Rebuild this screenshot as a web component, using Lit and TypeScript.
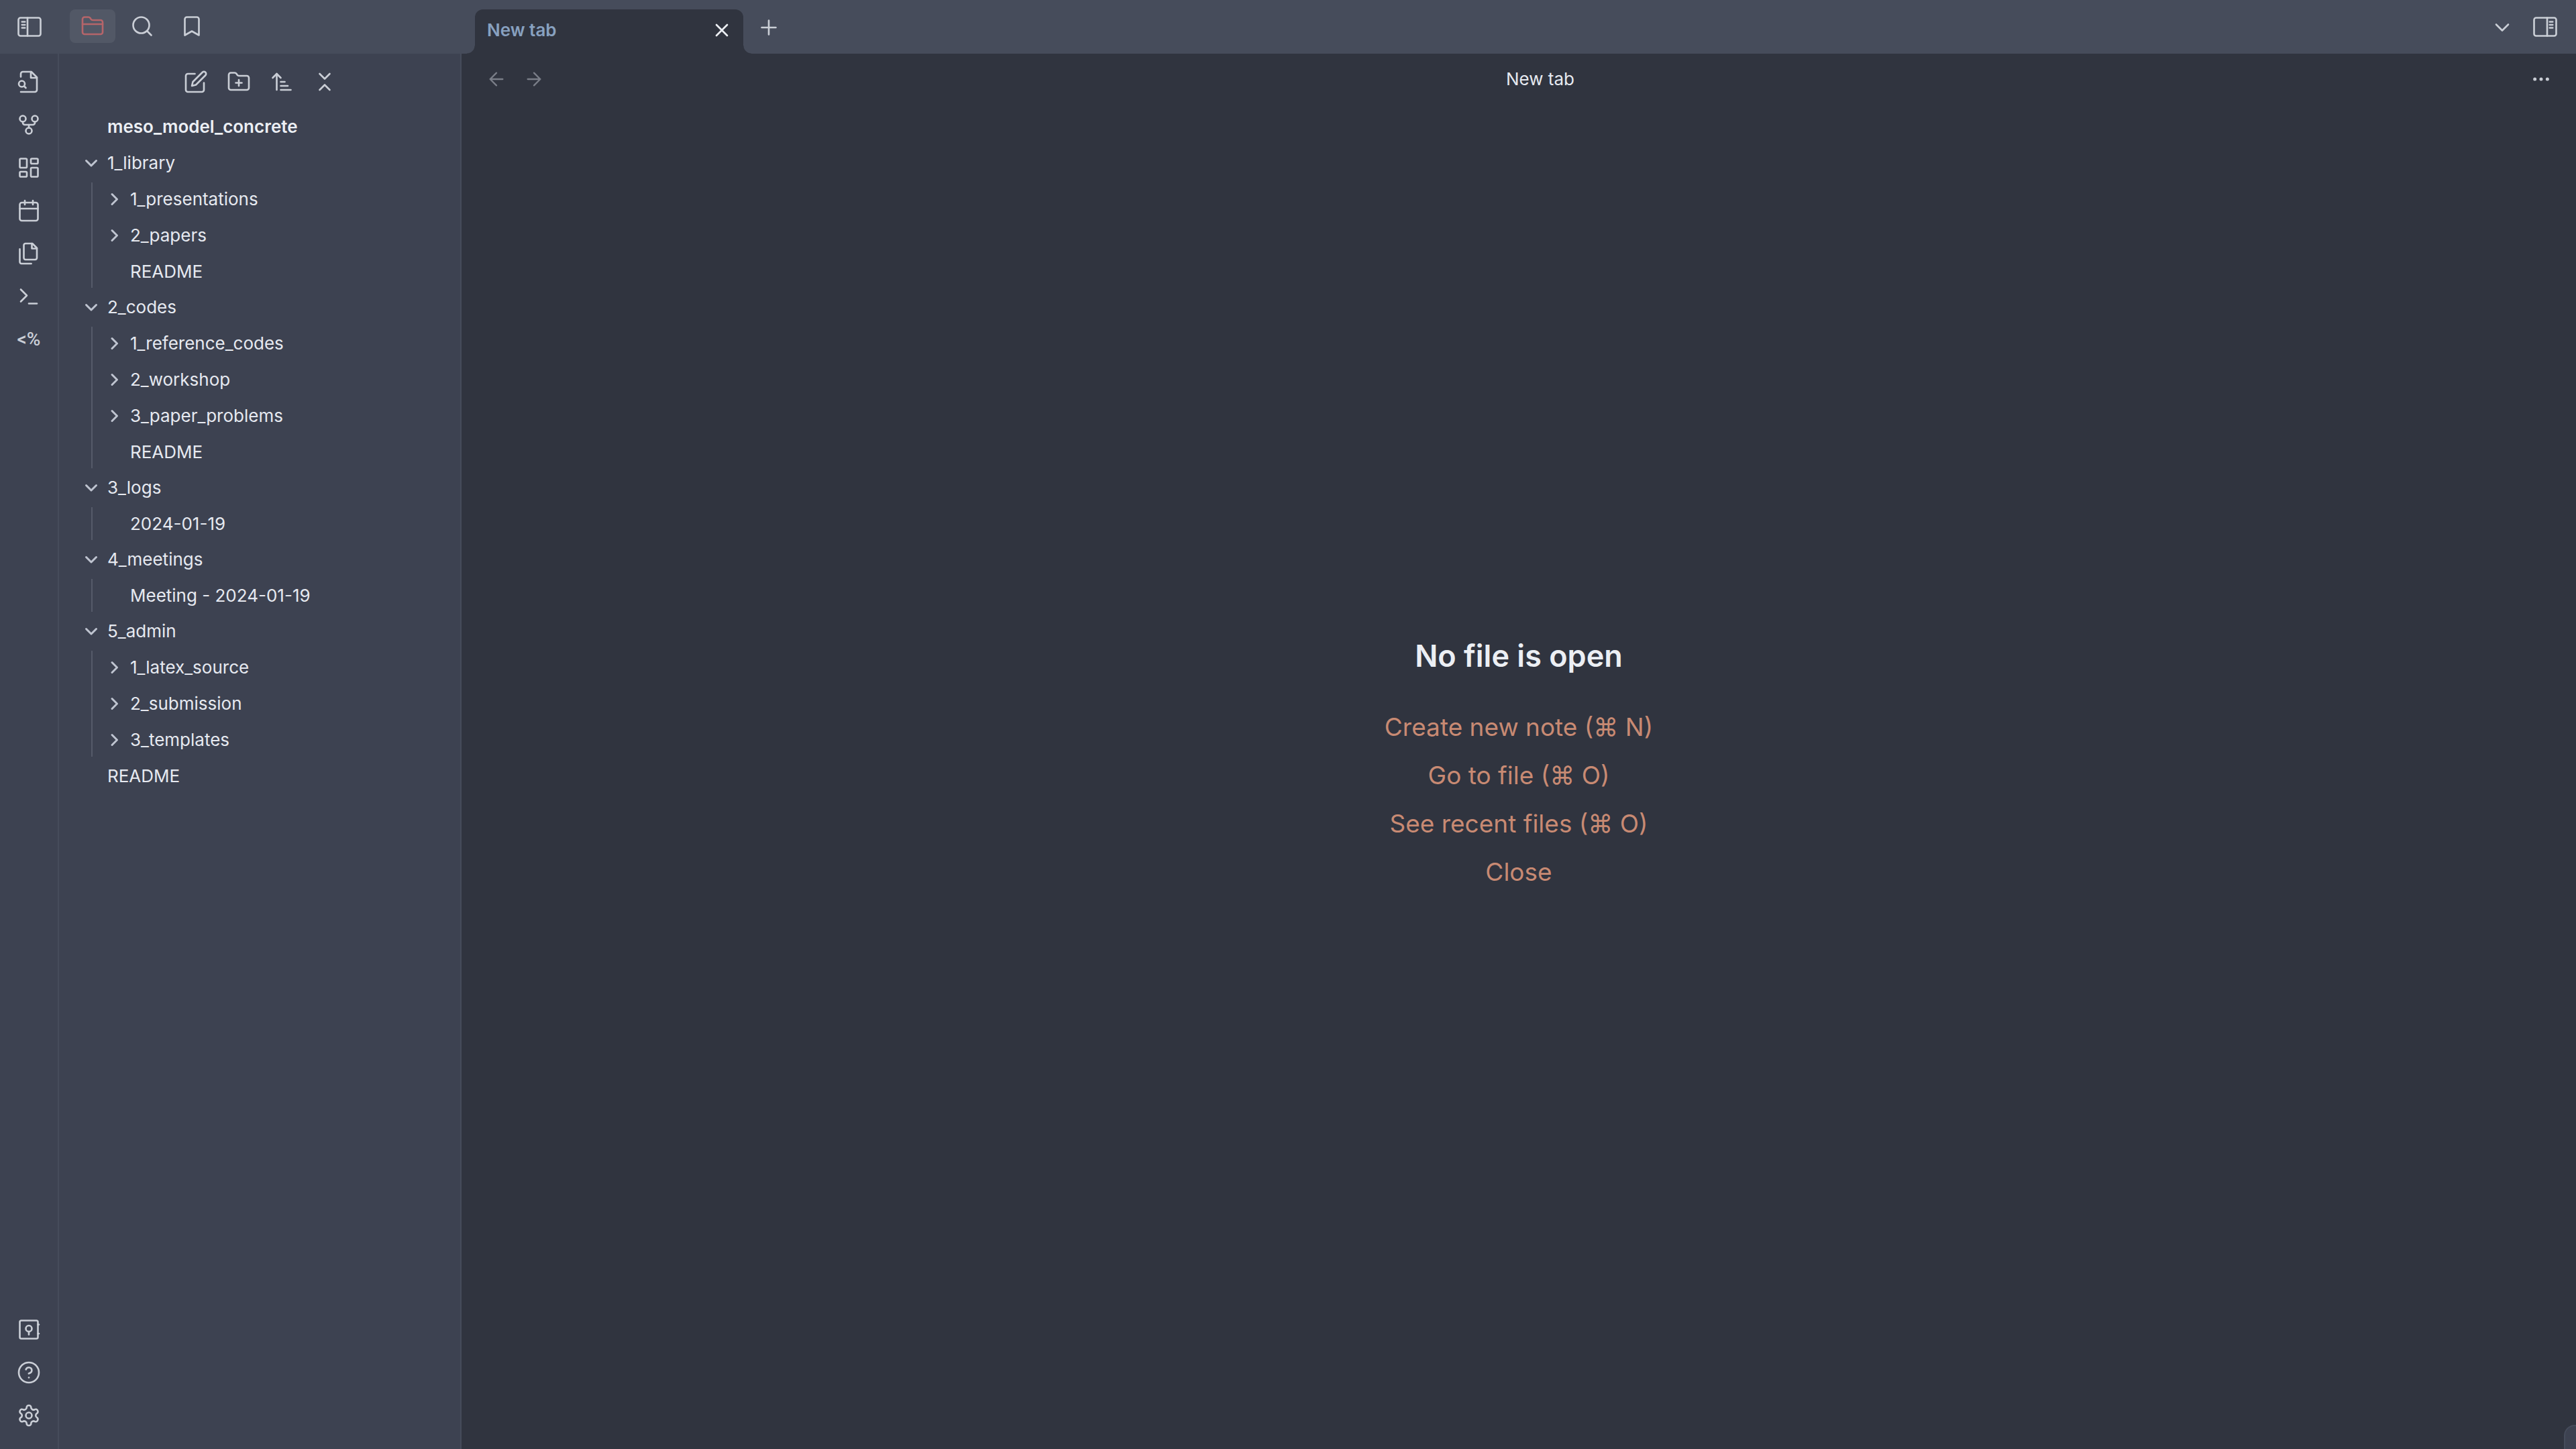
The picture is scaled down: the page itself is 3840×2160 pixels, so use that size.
import { LitElement, html, svg, css, nothing, type TemplateResult } from "lit";
import { customElement, property, state } from "lit/decorators.js";

const paths: Record<string, TemplateResult> = {
  folder: svg`<path d="M20 20a2 2 0 0 0 2-2V8a2 2 0 0 0-2-2h-7.9a2 2 0 0 1-1.69-.9L9.6 3.9A2 2 0 0 0 7.93 3H4a2 2 0 0 0-2 2v13a2 2 0 0 0 2 2Z"/><path d="M2 10h20"/>`,
  search: svg`<circle cx="11" cy="11" r="8"/><path d="m21 21-4.3-4.3"/>`,
  bookmark: svg`<path d="m19 21-7-4-7 4V5a2 2 0 0 1 2-2h10a2 2 0 0 1 2 2z"/>`,
  fileSearch: svg`<path d="M4 22h14a2 2 0 0 0 2-2V7.5L14.500 2H6a2 2 0 0 0-2 2v3"/><path d="M14 2v6h6"/><circle cx="5" cy="14" r="3"/><path d="m9 18-1.500-1.500"/>`,
  graph: svg`<circle cx="12" cy="18" r="3"/><circle cx="6" cy="6" r="3"/><circle cx="18" cy="6" r="3"/><path d="M18 9v1a2 2 0 0 1-2 2H8a2 2 0 0 1-2-2V9"/><path d="M12 12v3"/>`,
  dashboard: svg`<rect x="3" y="3" width="7" height="9" rx="1"/><rect x="14" y="3" width="7" height="5" rx="1"/><rect x="14" y="12" width="7" height="9" rx="1"/><rect x="3" y="16" width="7" height="5" rx="1"/>`,
  calendar: svg`<rect x="3" y="4" width="18" height="18" rx="2"/><path d="M16 2v4M8 2v4M3 10h18"/>`,
  files: svg`<path d="M15.5 2H8.6c-.4 0-.8.2-1.1.5-.3.3-.5.7-.5 1.1v12.8c0 .4.2.8.5 1.1.3.3.7.5 1.1.5h9.8c.4 0 .8-.2 1.1-.5.3-.3.5-.7.5-1.1V6.500L15.500 2z"/><path d="M3 7.6v12.8c0 .4.2.8.5 1.1.3.3.7.5 1.1.5h9.8"/><path d="M15 2v5h5"/>`,
  terminal: svg`<path d="m4 17 6-6-6-6"/><path d="M12 19h8"/>`,
  vault: svg`<rect x="3" y="3" width="18" height="18" rx="1.500"/><circle cx="12" cy="11" r="3"/><path d="M12 14v3M21 7h1M21 16h1"/>`,
  help: svg`<circle cx="12" cy="12" r="10"/><path d="M9.090 9a3 3 0 0 1 5.830 1c0 2-3 3-3 3"/><path d="M12 17h.01"/>`,
  settings: svg`<path d="M12.220 2h-.440a2 2 0 0 0-2 2v.180a2 2 0 0 1-1 1.730l-.430.250a2 2 0 0 1-2 0l-.150-.080a2 2 0 0 0-2.730.730l-.220.380a2 2 0 0 0 .730 2.730l.150.100a2 2 0 0 1 1 1.720v.510a2 2 0 0 1-1 1.740l-.150.090a2 2 0 0 0-.730 2.730l.220.380a2 2 0 0 0 2.730.730l.150-.080a2 2 0 0 1 2 0l.430.250a2 2 0 0 1 1 1.730V20a2 2 0 0 0 2 2h.440a2 2 0 0 0 2-2v-.180a2 2 0 0 1 1-1.730l.430-.250a2 2 0 0 1 2 0l.150.080a2 2 0 0 0 2.730-.730l.220-.390a2 2 0 0 0-.730-2.730l-.150-.080a2 2 0 0 1-1-1.740v-.500a2 2 0 0 1 1-1.740l.150-.090a2 2 0 0 0 .730-2.730l-.220-.380a2 2 0 0 0-2.730-.730l-.150.080a2 2 0 0 1-2 0l-.430-.250a2 2 0 0 1-1-1.730V4a2 2 0 0 0-2-2z"/><circle cx="12" cy="12" r="3"/>`,
  edit: svg`<path d="M11 4H4a2 2 0 0 0-2 2v14a2 2 0 0 0 2 2h14a2 2 0 0 0 2-2v-7"/><path d="M18.500 2.500a2.121 2.121 0 0 1 3 3L12 15l-4 1 1-4 9.500-9.500z"/>`,
  folderPlus: svg`<path d="M4 20h16a2 2 0 0 0 2-2V8a2 2 0 0 0-2-2h-7.930a2 2 0 0 1-1.660-.9l-.820-1.200A2 2 0 0 0 7.930 3H4a2 2 0 0 0-2 2v13c0 1.100.9 2 2 2Z"/><path d="M12 10v6M9 13h6"/>`,
  sort: svg`<path d="m3 8 4-4 4 4"/><path d="M7 4v16M11 12h4M11 16h7M11 20h10"/>`,
  collapse: svg`<path d="m7 20 5-5 5 5M7 4l5 5 5-5"/>`,
  close: svg`<path d="M18 6 6 18M6 6l12 12"/>`,
  plus: svg`<path d="M12 5v14M5 12h14"/>`,
  back: svg`<path d="m12 19-7-7 7-7M19 12H5"/>`,
  forward: svg`<path d="M5 12h14M12 5l7 7-7 7"/>`,
  chevronDown: svg`<path d="m6 9 6 6 6-6"/>`,
  more: svg`<circle cx="12" cy="12" r="1"/><circle cx="19" cy="12" r="1"/><circle cx="5" cy="12" r="1"/>`,
  panelLeft: svg`<rect x="1" y="3" width="22" height="18" rx="2"/><path d="M10 3v18M4.500 7h3M4.500 10h3M4.500 13h3"/>`,
  panelRight: svg`<rect x="1" y="3" width="22" height="18" rx="2"/><path d="M14 3v18M16.500 7h3M16.500 10h3M16.500 13h3"/>`,
};

const icon = (name: string, size = "") => html`
  <svg class="icon ${size}" viewBox="0 0 24 24" aria-hidden="true">${paths[name]}</svg>`;

const base = css`
  * { box-sizing: border-box; }
  button {
    margin: 0;
    padding: 0;
    border: 0;
    background: none;
    color: inherit;
    font: inherit;
    cursor: pointer;
  }
  .icon {
    display: block;
    width: 36px;
    height: 36px;
    fill: none;
    stroke: currentColor;
    stroke-width: 1.75;
    stroke-linecap: round;
    stroke-linejoin: round;
  }
  .icon.small { width: 32px; height: 32px; }
  .icon-button {
    display: flex;
    align-items: center;
    justify-content: center;
    width: 64px;
    height: 64px;
    color: var(--icon);
  }
`;

interface TreeNode {
  name: string;
  open?: boolean;
  children?: TreeNode[];
}

const folder = (name: string, children: TreeNode[] = [], open = false): TreeNode => ({ name, children, open });
const file = (name: string): TreeNode => ({ name });

const vault: TreeNode[] = [
  folder("1_library", [folder("1_presentations"), folder("2_papers"), file("README")], true),
  folder("2_codes", [folder("1_reference_codes"), folder("2_workshop"), folder("3_paper_problems"), file("README")], true),
  folder("3_logs", [file("2024-01-19")], true),
  folder("4_meetings", [file("Meeting - 2024-01-19")], true),
  folder("5_admin", [folder("1_latex_source"), folder("2_submission"), folder("3_templates")], true),
  file("README"),
];

@customElement("file-tree")
class FileTree extends LitElement {
  static styles = [base, css`
    :host { display: block; }
    .title, .row {
      display: flex;
      align-items: center;
      width: 100%;
      text-align: left;
      white-space: nowrap;
    }
    .title {
      margin: 0 0 4px;
      padding: 8px 0 8px 72px;
      font-size: 26px;
      line-height: 34px;
      font-weight: 600;
      color: var(--text-strong);
    }
    .list {
      display: flex;
      flex-direction: column;
      gap: 4px;
      margin: 0;
      padding: 0;
      list-style: none;
    }
    .list .list {
      margin: 4px 0 0 48px;
      border-left: 2px solid var(--guide);
    }
    .row { padding: 8px 0 8px 36px; line-height: 34px; }
    .list .list .row { padding-left: 20px; }
    .row.file { line-height: 33px; }
    .caret {
      flex: none;
      width: 24px;
      height: 24px;
      margin-right: 12px;
      fill: none;
      stroke: var(--caret);
      stroke-width: 3;
      stroke-linecap: round;
      stroke-linejoin: round;
    }
    .file::before {
      content: "";
      flex: none;
      width: 36px;
    }
  `];

  @property({ attribute: false }) nodes: TreeNode[] = [];
  @property() heading = "";

  private toggle(node: TreeNode) {
    node.open = !node.open;
    this.requestUpdate();
  }

  private renderNode(node: TreeNode): TemplateResult {
    if (!node.children) {
      return html`<li><button class="row file">${node.name}</button></li>`;
    }
    return html`
      <li>
        <button class="row" aria-expanded=${node.open ? "true" : "false"} @click=${() => this.toggle(node)}>
          <svg class="caret" viewBox="0 0 24 24" aria-hidden="true">
            <path d=${node.open ? "M4.500 8.500l7.500 7.500 7.500-7.500" : "M9 4.500l7.500 7.500-7.500 7.500"}></path>
          </svg>
          ${node.name}
        </button>
        ${node.open && node.children.length ? this.renderList(node.children) : nothing}
      </li>`;
  }

  private renderList(nodes: TreeNode[]): TemplateResult {
    return html`<ul class="list">${nodes.map((n) => this.renderNode(n))}</ul>`;
  }

  render() {
    return html`<h2 class="title">${this.heading}</h2>${this.renderList(this.nodes)}`;
  }
}

@customElement("app-root")
class AppRoot extends LitElement {
  static styles = [base, css`
    :host {
      --bar: #464c5b;
      --side: #3d4251;
      --main: #30343f;
      --line: #464c5b;
      --guide: #555a69;
      --icon: #caced6;
      --caret: #bfc4d0;
      --text: #e6e9f0;
      --text-strong: #eceff4;
      --accent: #c88a73;
      --tab: #88a1c0;
      --folder: #b5656a;
      display: grid;
      grid-template-columns: 88px 600px minmax(0, 1fr);
      grid-template-rows: 80px minmax(0, 1fr);
      position: relative;
      height: 100vh;
      overflow: hidden;
      background: var(--main);
      color: var(--text);
      font-family: Inter, "Liberation Sans", sans-serif;
      font-size: 26px;
      line-height: 34px;
    }
    .corner, .side-tabs, .tab-bar { background: var(--bar); }
    .corner {
      display: flex;
      align-items: center;
      justify-content: center;
    }
    .side-tabs {
      display: flex;
      align-items: flex-start;
      gap: 6px;
      padding: 14px 16px;
    }
    .side-tabs .icon-button {
      width: 68px;
      height: 50px;
      border-radius: 8px;
    }
    .side-tabs .active {
      background: #525866;
      color: var(--folder);
    }
    .tab-bar {
      display: flex;
      align-items: flex-end;
      padding: 0 14px 0 20px;
    }
    .tab {
      position: relative;
      display: flex;
      align-items: center;
      justify-content: space-between;
      width: 400px;
      height: 66px;
      padding: 0 16px 4px 18px;
      border-radius: 12px 12px 0 0;
      background: var(--main);
      color: var(--tab);
      font-weight: 600;
    }
    .tab::before, .tab::after {
      content: "";
      position: absolute;
      bottom: 0;
      width: 12px;
      height: 12px;
    }
    .tab::before {
      right: 100%;
      background: radial-gradient(circle at 0 0, transparent 11px, var(--main) 12px);
    }
    .tab::after {
      left: 100%;
      background: radial-gradient(circle at 100% 0, transparent 11px, var(--main) 12px);
    }
    .tab-close { color: var(--text-strong); }
    .tab-close .icon { stroke-width: 2; }
    .tab-bar .icon-button { height: 78px; }
    .tab-bar .add { margin: 0 auto 0 6px; }
    .tab-bar .panel { height: 80px; }
    .ribbon {
      display: flex;
      flex-direction: column;
      justify-content: space-between;
      align-items: center;
      padding: 10px 0 18px;
      background: var(--side);
      border-right: 2px solid var(--line);
    }
    .glyph {
      font-family: Roboto, "Liberation Sans", sans-serif;
      font-size: 28px;
      font-weight: 500;
    }
    .side {
      background: var(--side);
      border-right: 2px solid var(--line);
      overflow: hidden;
    }
    .side-tools {
      display: flex;
      justify-content: center;
      padding: 10px 0 10px 2px;
    }
    .main {
      display: flex;
      flex-direction: column;
    }
    .view-header {
      display: flex;
      align-items: center;
      height: 76px;
      padding: 0 30px 0 24px;
    }
    .nav { display: flex; }
    .nav .icon-button {
      width: 56px;
      color: #7a7e88;
    }
    .view-header .more { width: 44px; }
    .view-title {
      flex: 1;
      padding-left: 2px;
      text-align: center;
    }
    .empty {
      flex: 1;
      display: flex;
      flex-direction: column;
      align-items: center;
      justify-content: center;
      padding-bottom: 32px;
    }
    .empty-title {
      margin: 0 0 40px;
      font-size: 45px;
      line-height: 60px;
      font-weight: 600;
      color: var(--text-strong);
    }
    .action {
      padding: 10px 0;
      font-size: 37px;
      line-height: 52px;
      color: var(--accent);
    }
    .status {
      position: absolute;
      right: 0;
      bottom: 0;
      width: 18px;
      height: 36px;
      border: 2px solid var(--line);
      border-width: 2px 0 0 2px;
      border-radius: 16px 0 0 0;
      background: var(--side);
    }
  `];

  @state() private activeSide = "Files";

  private button(label: string, name: string, cls = "", size = "") {
    return html`<button class="icon-button ${cls}" aria-label=${label}>${icon(name, size)}</button>`;
  }

  private sideTab(label: string, name: string) {
    const active = this.activeSide === label;
    return html`<button
      class="icon-button ${active ? "active" : ""}"
      aria-label=${label}
      aria-pressed=${active ? "true" : "false"}
      @click=${() => (this.activeSide = label)}
    >${icon(name)}</button>`;
  }

  render() {
    return html`
      <div class="corner">${this.button("Collapse left sidebar", "panelLeft")}</div>
      <div class="side-tabs">
        ${this.sideTab("Files", "folder")}
        ${this.sideTab("Search", "search")}
        ${this.sideTab("Bookmarks", "bookmark")}
      </div>
      <header class="tab-bar">
        <div class="tab">
          <span>New tab</span>
          <button class="tab-close" aria-label="Close tab">${icon("close", "small")}</button>
        </div>
        ${this.button("Open new tab", "plus", "add")}
        ${this.button("Tab list", "chevronDown")}
        ${this.button("Expand right sidebar", "panelRight", "panel")}
      </header>

      <nav class="ribbon" aria-label="Ribbon">
        <div>
          ${this.button("Open quick switcher", "fileSearch")}
          ${this.button("Open graph view", "graph")}
          ${this.button("Create new canvas", "dashboard")}
          ${this.button("Open today's daily note", "calendar")}
          ${this.button("Insert template", "files")}
          ${this.button("Open command palette", "terminal")}
          <button class="icon-button glyph" aria-label="Templater">&lt;%</button>
        </div>
        <div>
          ${this.button("Open another vault", "vault")}
          ${this.button("Help", "help")}
          ${this.button("Settings", "settings")}
        </div>
      </nav>

      <aside class="side">
        <div class="side-tools">
          ${this.button("New note", "edit")}
          ${this.button("New folder", "folderPlus")}
          ${this.button("Change sort order", "sort")}
          ${this.button("Collapse all", "collapse")}
        </div>
        <file-tree heading="meso_model_concrete" .nodes=${vault}></file-tree>
      </aside>

      <main class="main">
        <div class="view-header">
          <div class="nav">
            ${this.button("Navigate back", "back", "", "small")}
            ${this.button("Navigate forward", "forward", "", "small")}
          </div>
          <div class="view-title">New tab</div>
          ${this.button("More options", "more", "more", "small")}
        </div>
        <section class="empty">
          <h1 class="empty-title">No file is open</h1>
          <button class="action">Create new note (⌘ N)</button>
          <button class="action">Go to file (⌘ O)</button>
          <button class="action">See recent files (⌘ O)</button>
          <button class="action">Close</button>
        </section>
      </main>
      <div class="status"></div>
    `;
  }
}
